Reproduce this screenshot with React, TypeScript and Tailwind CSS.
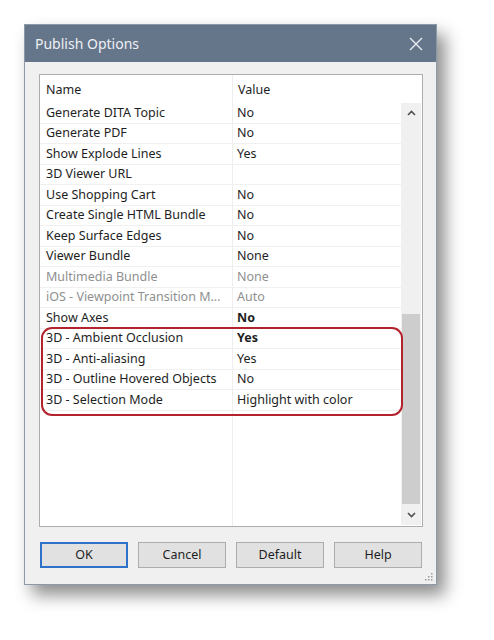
const ROWS: { name: string; value: string; disabled?: boolean; bold?: boolean }[] = [
  { name: 'Generate DITA Topic', value: 'No' },
  { name: 'Generate PDF', value: 'No' },
  { name: 'Show Explode Lines', value: 'Yes' },
  { name: '3D Viewer URL', value: '' },
  { name: 'Use Shopping Cart', value: 'No' },
  { name: 'Create Single HTML Bundle', value: 'No' },
  { name: 'Keep Surface Edges', value: 'No' },
  { name: 'Viewer Bundle', value: 'None' },
  { name: 'Multimedia Bundle', value: 'None', disabled: true },
  { name: 'iOS - Viewpoint Transition M...', value: 'Auto', disabled: true },
  { name: 'Show Axes', value: 'No', bold: true },
  { name: '3D - Ambient Occlusion', value: 'Yes', bold: true },
  { name: '3D - Anti-aliasing', value: 'Yes' },
  { name: '3D - Outline Hovered Objects', value: 'No' },
  { name: '3D - Selection Mode', value: 'Highlight with color' },
];

const BUTTONS = ['OK', 'Cancel', 'Default', 'Help'];

function Chevron({ up }: { up?: boolean }) {
  return (
    <svg width="9" height="6" viewBox="0 0 9 6" className="text-[#505050]">
      <path d={up ? 'M1 5 L4.5 1.5 L8 5' : 'M1 1 L4.5 4.5 L8 1'} fill="none" stroke="currentColor" strokeWidth="1.6" />
    </svg>
  );
}

export default function App() {
  return (
    <div
      className="min-h-[640px] bg-white pl-[24px] pt-[24px]"
      style={{ fontFamily: '"Noto Sans", "Open Sans", sans-serif' }}
    >
      {/* Dialog window */}
      <div className="w-[413px] h-[561px] flex flex-col border border-[#8d99a6] bg-[#f0f0f0] shadow-[8px_10px_16px_rgba(0,0,0,0.45)]">
        {/* Title bar */}
        <div className="h-[37px] shrink-0 bg-[#65758a] flex items-center justify-between pl-[10px] pr-[13px]">
          <span className="text-[14px] text-[#eef1f4] leading-none">Publish Options</span>
          <svg width="14" height="14" viewBox="0 0 14 14">
            <path d="M1 1 L13 13 M13 1 L1 13" stroke="#e8ecf0" strokeWidth="1.4" />
          </svg>
        </div>

        {/* Client */}
        <div className="flex-1 flex flex-col px-[14px] pt-[12px]">
          {/* Property list */}
          <div className="relative h-[453px] w-[384px] border border-[#adadad] bg-white flex flex-col text-[12.5px] text-[#1e1e1e]">
            <div className="h-[28px] shrink-0 flex items-center">
              <div className="w-[192px] pl-[6px] pt-[3px]">Name</div>
              <div className="pl-[5px] pt-[3px] border-l border-[#eeeeee] h-full flex items-center">Value</div>
            </div>
            <div className="flex-1 flex">
              <div className="flex-1 flex flex-col">
                {ROWS.map((r) => (
                  <div key={r.name} className="h-[20.5px] flex border-b border-[#f0f0f0]">
                    <div className={`w-[192px] pl-[6px] pt-[1px] flex items-center whitespace-nowrap ${r.disabled ? 'text-[#8f8f8f]' : ''}`}>
                      {r.name}
                    </div>
                    <div
                      className={`flex-1 pl-[4px] pt-[1px] flex items-center border-l border-[#eeeeee] whitespace-nowrap ${r.disabled ? 'text-[#8f8f8f]' : ''} ${r.bold ? 'font-bold' : ''}`}
                    >
                      {r.value}
                    </div>
                  </div>
                ))}
                <div className="flex-1 flex">
                  <div className="w-[192px]" />
                  <div className="flex-1 border-l border-[#eeeeee]" />
                </div>
              </div>
              {/* Scrollbar */}
              <div className="w-[20px] mr-[1px] mb-[1px] bg-[#f0f0f0] flex flex-col items-center">
                <div className="h-[20px] flex items-center justify-center"><Chevron up /></div>
                <div className="flex-1 w-full flex flex-col pt-[191px] pb-[1px]">
                  <div className="flex-1 bg-[#cdcdcd] mx-[1px]" />
                </div>
                <div className="h-[20px] flex items-center justify-center"><Chevron /></div>
              </div>
            </div>

            {/* Highlight annotation */}
            <div className="absolute left-[1px] top-[252px] w-[362px] h-[89px] rounded-[11px] border-2 border-[#b3232c]" />
          </div>

          {/* Buttons */}
          <div className="mt-[15px] flex gap-[10px] w-[384px] pl-[1px]">
            {BUTTONS.map((b) => (
              <div
                key={b}
                className={`w-[88px] h-[26px] flex items-center justify-center bg-[#e1e1e1] text-[12.5px] text-[#1e1e1e] ${b === 'OK' ? 'border-2 border-[#2f72c9]' : 'border border-[#adadad]'}`}
              >
                {b}
              </div>
            ))}
          </div>
          <div className="flex-1 flex justify-end items-end pb-[3px] -mr-[11px]">
            <svg width="8" height="8" viewBox="0 0 8 8" fill="#9a9a9a">
              <rect x="6" y="0" width="1.5" height="1.5" />
              <rect x="3" y="3" width="1.5" height="1.5" />
              <rect x="6" y="3" width="1.5" height="1.5" />
              <rect x="0" y="6" width="1.5" height="1.5" />
              <rect x="3" y="6" width="1.5" height="1.5" />
              <rect x="6" y="6" width="1.5" height="1.5" />
            </svg>
          </div>
        </div>
      </div>
    </div>
  );
}
